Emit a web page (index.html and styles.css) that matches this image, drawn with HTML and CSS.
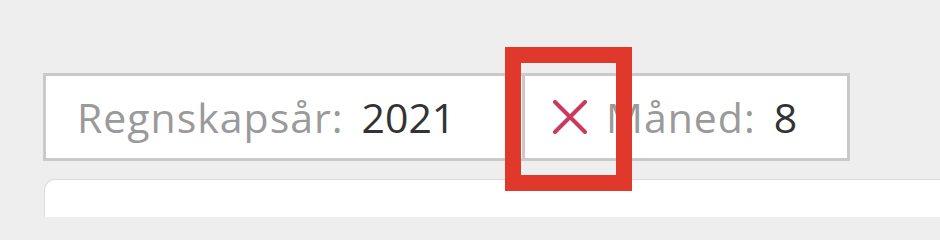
FILE: index.html
```html
<!DOCTYPE html>
<html lang="no">
<head>
<meta charset="utf-8">
<title>Filter</title>
<link rel="stylesheet" href="styles.css">
</head>
<body>
<div class="page">
  <div class="filters">
    <div class="tag tag-first">
      <span class="label">Regnskapsår:</span>
      <span class="value">2021</span>
    </div>
    <div class="tag tag-second">
      <span class="remove">
        <svg width="34" height="34" viewBox="0 0 34 34" aria-hidden="true">
          <path d="M2 2 L32 32 M32 2 L2 32" stroke="#c93a5e" stroke-width="4" stroke-linecap="round" fill="none"/>
        </svg>
      </span>
      <span class="label">Måned:</span>
      <span class="value">8</span>
    </div>
    <div class="highlight"></div>
  </div>
  <div class="card"></div>
</div>
</body>
</html>
```
FILE: styles.css
```css
html, body {
  margin: 0;
  padding: 0;
  background: #eeeeee;
  font-family: "Open Sans", "Liberation Sans", sans-serif;
  overflow: hidden;
}
.page {
  padding: 73px 0 0 43px;
  height: 217px;
  box-sizing: border-box;
}
.filters {
  position: relative;
  display: flex;
  height: 88px;
}
.tag {
  display: flex;
  align-items: center;
  background: #ffffff;
  border: 3px solid #c9c9c9;
  box-sizing: border-box;
  height: 88px;
  font-size: 41px;
  line-height: 1;
}
.tag-first {
  width: 479px;
  padding-left: 31px;
  border-right: none;
}
.tag-second {
  width: 328px;
  padding-left: 28px;
}
.label {
  color: #9a9a9a;
  letter-spacing: 1px;
  margin-right: 18px;
}
.value {
  color: #333333;
}
.remove {
  display: flex;
  width: 34px;
  height: 34px;
  margin-right: 19px;
}
.highlight {
  position: absolute;
  left: 462px;
  top: -26px;
  width: 127px;
  height: 144px;
  border: 16px solid #e0392b;
  box-sizing: border-box;
}
.card {
  margin-top: 18px;
  margin-left: 1px;
  height: 60px;
  background: #ffffff;
  border: 1px solid #dcdcdc;
  border-right: none;
  border-radius: 11px 0 0 0;
}
```
